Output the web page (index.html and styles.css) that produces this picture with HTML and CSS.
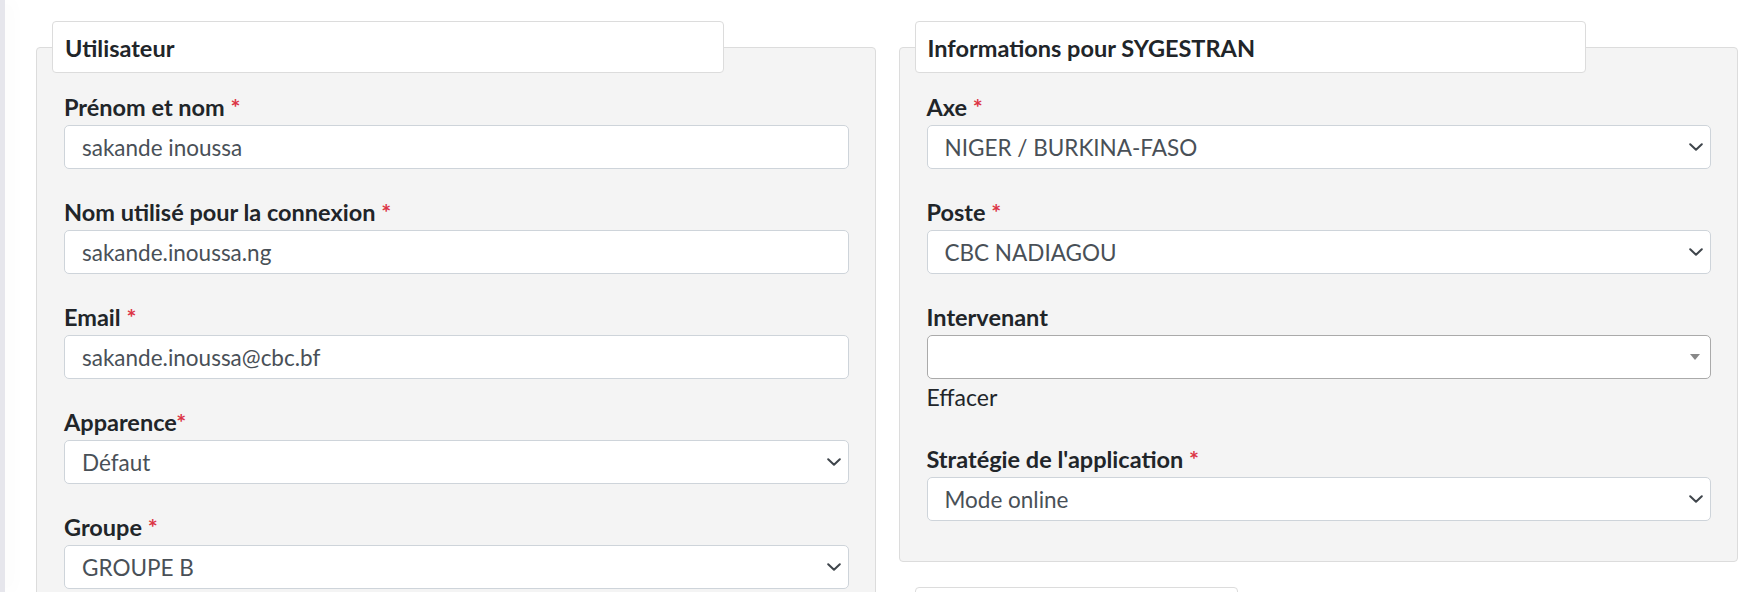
FILE: index.html
```html
<!DOCTYPE html>
<html lang="fr">
<head>
<meta charset="utf-8">
<title>Utilisateur</title>
<link rel="stylesheet" href="styles.css">
</head>
<body>
<div class="edge"></div>
<main class="page">
  <div class="col">
    <section class="panel">
      <div class="panel-title">Utilisateur</div>
      <div class="panel-body">
        <div class="field">
          <div class="label">Prénom et nom <span class="req">*</span></div>
          <div class="control">sakande inoussa</div>
        </div>
        <div class="field">
          <div class="label">Nom utilisé pour la connexion <span class="req">*</span></div>
          <div class="control">sakande.inoussa.ng</div>
        </div>
        <div class="field">
          <div class="label">Email <span class="req">*</span></div>
          <div class="control">sakande.inoussa@cbc.bf</div>
        </div>
        <div class="field">
          <div class="label">Apparence<span class="req">*</span></div>
          <div class="control control-select"><span>Défaut</span><svg class="chev" width="14" height="8" viewBox="0 0 14 8"><path d="M1.2 1.2 7 6.8 12.8 1.2"/></svg></div>
        </div>
        <div class="field">
          <div class="label">Groupe <span class="req">*</span></div>
          <div class="control control-select"><span>GROUPE B</span><svg class="chev" width="14" height="8" viewBox="0 0 14 8"><path d="M1.2 1.2 7 6.8 12.8 1.2"/></svg></div>
        </div>
      </div>
    </section>
  </div>
  <div class="col">
    <section class="panel">
      <div class="panel-title">Informations pour SYGESTRAN</div>
      <div class="panel-body">
        <div class="field">
          <div class="label">Axe <span class="req">*</span></div>
          <div class="control control-select"><span>NIGER / BURKINA-FASO</span><svg class="chev" width="14" height="8" viewBox="0 0 14 8"><path d="M1.2 1.2 7 6.8 12.8 1.2"/></svg></div>
        </div>
        <div class="field">
          <div class="label">Poste <span class="req">*</span></div>
          <div class="control control-select"><span>CBC NADIAGOU</span><svg class="chev" width="14" height="8" viewBox="0 0 14 8"><path d="M1.2 1.2 7 6.8 12.8 1.2"/></svg></div>
        </div>
        <div class="field">
          <div class="label">Intervenant</div>
          <div class="control control-select2"><span></span><span class="tri"></span></div>
          <div class="clear-link">Effacer</div>
        </div>
        <div class="field">
          <div class="label">Stratégie de l'application <span class="req">*</span></div>
          <div class="control control-select"><span>Mode online</span><svg class="chev" width="14" height="8" viewBox="0 0 14 8"><path d="M1.2 1.2 7 6.8 12.8 1.2"/></svg></div>
        </div>
      </div>
    </section>
    <section class="panel">
      <div class="panel-title panel-title-short"></div>
      <div class="panel-body panel-body-empty"></div>
    </section>
  </div>
</main>
</body>
</html>
```

FILE: styles.css
```css
* { box-sizing: border-box; }

html, body {
  margin: 0;
  height: 592px;
  overflow: hidden;
  background: #ffffff;
}

body {
  display: flex;
  font-family: "Lato", "Liberation Sans", sans-serif;
  color: #212529;
}

.edge {
  flex: none;
  width: 5px;
  background: #e6e6ec;
  box-shadow: 4px 0 18px rgba(0, 0, 0, 0.05);
}

.page {
  flex: 1;
  display: grid;
  grid-template-columns: 1fr 1fr;
  column-gap: 23px;
  align-items: start;
  padding: 21px 15px 0 31px;
}

.col {
  display: flex;
  flex-direction: column;
  gap: 25px;
}

.panel {
  display: flex;
  flex-direction: column;
}

.panel-title {
  position: relative;
  z-index: 1;
  align-self: flex-start;
  width: 80%;
  height: 52px;
  margin: 0 0 -26px 16px;
  padding: 2px 12px 0;
  display: flex;
  align-items: center;
  background: #ffffff;
  border: 1px solid #dcdcdc;
  border-radius: 4px;
  font-size: 23.5px;
  font-weight: 700;
  color: #212529;
}

.panel-title-short {
  width: 323px;
}

.panel-body {
  background: #f4f4f4;
  border: 1px solid #dcdcdc;
  border-radius: 4px;
  padding: 47px 26px 9px 27px;
}

.panel-body-empty {
  height: 200px;
}

.field {
  margin-bottom: 31px;
}

.label {
  font-size: 23.5px;
  font-weight: 700;
  line-height: 24px;
  margin-bottom: 6px;
  color: #212529;
  white-space: nowrap;
}

.req {
  color: #dc3545;
}

.control {
  height: 44px;
  display: flex;
  align-items: center;
  justify-content: space-between;
  padding: 0 17px;
  background: #ffffff;
  border: 1px solid #ced4da;
  border-radius: 5px;
  font-size: 22.5px;
  color: #495057;
  white-space: nowrap;
}

.control-select {
  padding-right: 7px;
}

.chev {
  flex: none;
}

.chev path {
  fill: none;
  stroke: #3f454b;
  stroke-width: 2;
  stroke-linecap: round;
  stroke-linejoin: round;
}

.control-select2 {
  border-color: #aaaaaa;
  padding-right: 10px;
}

.tri {
  width: 0;
  height: 0;
  border-style: solid;
  border-width: 6px 5px 0 5px;
  border-color: #888888 transparent transparent transparent;
}

.clear-link {
  font-size: 23px;
  line-height: 37px;
  color: #212529;
}
```
